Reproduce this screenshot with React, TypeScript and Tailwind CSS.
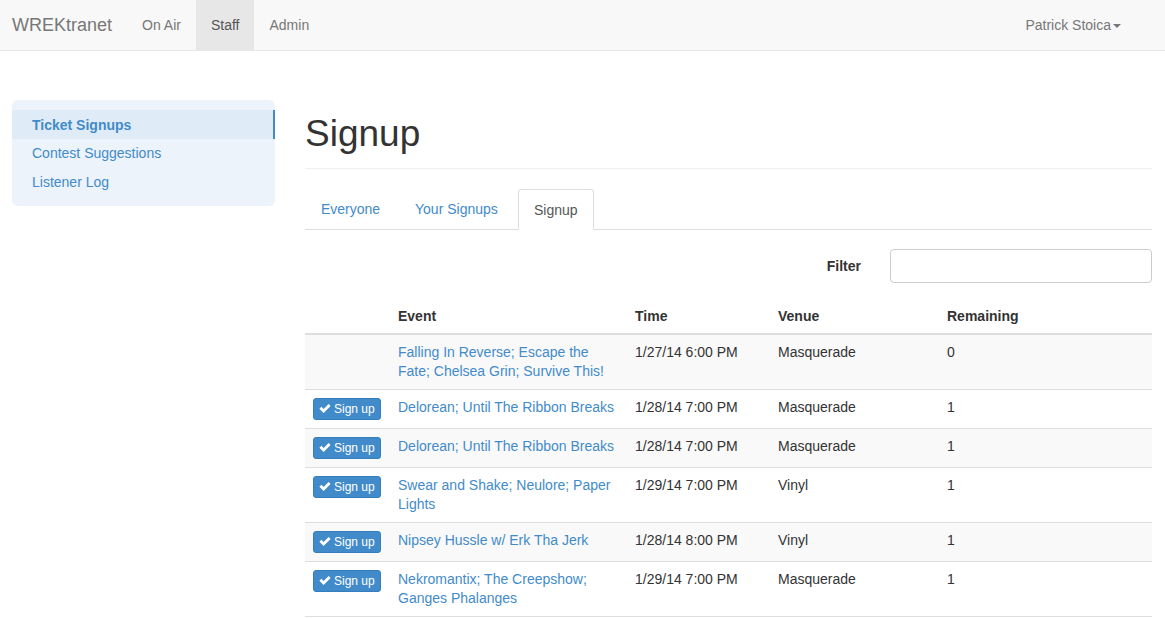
import React from "react";

type Row = {
  event: string;
  time: string;
  venue: string;
  remaining: number;
  canSignup: boolean;
};

const rows: Row[] = [
  {
    event: "Falling In Reverse; Escape the Fate; Chelsea Grin; Survive This!",
    time: "1/27/14 6:00 PM",
    venue: "Masquerade",
    remaining: 0,
    canSignup: false,
  },
  { event: "Delorean; Until The Ribbon Breaks", time: "1/28/14 7:00 PM", venue: "Masquerade", remaining: 1, canSignup: true },
  { event: "Delorean; Until The Ribbon Breaks", time: "1/28/14 7:00 PM", venue: "Masquerade", remaining: 1, canSignup: true },
  { event: "Swear and Shake; Neulore; Paper Lights", time: "1/29/14 7:00 PM", venue: "Vinyl", remaining: 1, canSignup: true },
  { event: "Nipsey Hussle w/ Erk Tha Jerk", time: "1/28/14 8:00 PM", venue: "Vinyl", remaining: 1, canSignup: true },
  { event: "Nekromantix; The Creepshow; Ganges Phalanges", time: "1/29/14 7:00 PM", venue: "Masquerade", remaining: 1, canSignup: true },
];

function CheckIcon() {
  return (
    <svg width="12" height="11" viewBox="0 0 12 11" className="inline-block mr-[3px] -mt-[2px] align-middle">
      <path d="M0.4 5.8 L2.4 3.8 L4.6 6 L9.6 0.9 L11.6 2.9 L4.6 9.9 Z" fill="white" />
    </svg>
  );
}

function SignupButton() {
  return (
    <button className="h-[22px] px-[5px] rounded-[3px] bg-[#428bca] border border-[#357ebd] text-white text-[12px] leading-[18px] whitespace-nowrap">
      <CheckIcon />
      Sign up
    </button>
  );
}

export default function App() {
  const sideItems = ["Ticket Signups", "Contest Suggestions", "Listener Log"];

  return (
    <div className="min-h-screen bg-white text-[14px] leading-[20px] text-[#333] font-['Liberation_Sans',Arial,sans-serif]">
      {/* Navbar */}
      <div className="h-[51px] bg-[#f8f8f8] border-b border-[#e7e7e7] flex items-stretch">
        <div className="pl-3 pr-[15px] flex items-center text-[18px] text-[#777]">WREKtranet</div>
        <div className="flex">
          <div className="px-[15px] flex items-center text-[#777]">On Air</div>
          <div className="px-[15px] flex items-center text-[#555] bg-[#e7e7e7]">Staff</div>
          <div className="px-[15px] flex items-center text-[#777]">Admin</div>
        </div>
        <div className="ml-auto mr-[29px] px-[15px] flex items-center text-[#777]">
          Patrick Stoica
          <span className="ml-[2px] mt-[2px] w-0 h-0 border-t-[4px] border-t-[#777] border-x-[4px] border-x-transparent" />
        </div>
      </div>

      <div className="flex pt-[49px] pl-3 pr-[13px]">
        {/* Sidebar */}
        <div className="w-[263px] shrink-0 self-start rounded-[6px] bg-[#ecf3fa] pt-[10px] pb-[10px]">
          {sideItems.map((item, i) => (
            <div
              key={item}
              className={
                i === 0
                  ? "h-[29px] pl-5 flex items-center font-bold text-[#428bca] bg-[#dfebf6] border-r-2 border-[#428bca]"
                  : "h-[28.5px] pl-5 flex items-center text-[#428bca]"
              }
            >
              {item}
            </div>
          ))}
        </div>

        {/* Main */}
        <div className="flex-1 ml-[30px]">
          <h1 className="mt-[14px] pb-[14px] border-b border-[#eee] text-[37px] leading-[40px] text-[#333]">Signup</h1>

          {/* Tabs */}
          <div className="mt-[20px] flex border-b border-[#ddd] h-[41px]">
            <div className="mr-[2px] w-[92px] pl-4 h-[40px] flex items-center text-[#428bca]">Everyone</div>
            <div className="mr-[2px] w-[117px] pl-4 h-[40px] flex items-center text-[#428bca]">Your Signups</div>
            <div className="w-[76px] pl-[15px] h-[41px] flex items-center text-[#555] bg-white border border-[#ddd] border-b-white rounded-t-[4px]">
              Signup
            </div>
          </div>

          {/* Filter */}
          <div className="mt-[19px] flex items-center justify-end">
            <label className="font-bold">Filter</label>
            <input className="ml-[29px] w-[262px] h-[34px] rounded-[4px] border border-[#ccc] px-3 outline-none" />
          </div>

          {/* Table */}
          <table className="mt-[15px] w-full table-fixed border-collapse leading-[19px]">
            <colgroup>
              <col className="w-[85px]" />
              <col className="w-[237px]" />
              <col className="w-[143px]" />
              <col className="w-[169px]" />
              <col />
            </colgroup>
            <thead>
              <tr className="border-b-2 border-[#ddd]">
                <th className="px-2 pt-[9px] pb-[7px] text-left font-bold"></th>
                <th className="px-2 pt-[9px] pb-[7px] text-left font-bold">Event</th>
                <th className="px-2 pt-[9px] pb-[7px] text-left font-bold">Time</th>
                <th className="px-2 pt-[9px] pb-[7px] text-left font-bold">Venue</th>
                <th className="px-2 pt-[9px] pb-[7px] text-left font-bold">Remaining</th>
              </tr>
            </thead>
            <tbody>
              {rows.map((row, i) => (
                <tr key={i} className={i % 2 === 0 ? "bg-[#f9f9f9] border-b border-[#ddd]" : "border-b border-[#ddd]"}>
                  <td className="p-2 align-top">{row.canSignup && <SignupButton />}</td>
                  <td className="p-2 align-top text-[#428bca]">{row.event}</td>
                  <td className="p-2 align-top">{row.time}</td>
                  <td className="p-2 align-top">{row.venue}</td>
                  <td className="p-2 align-top">{row.remaining}</td>
                </tr>
              ))}
            </tbody>
          </table>
        </div>
      </div>
    </div>
  );
}
